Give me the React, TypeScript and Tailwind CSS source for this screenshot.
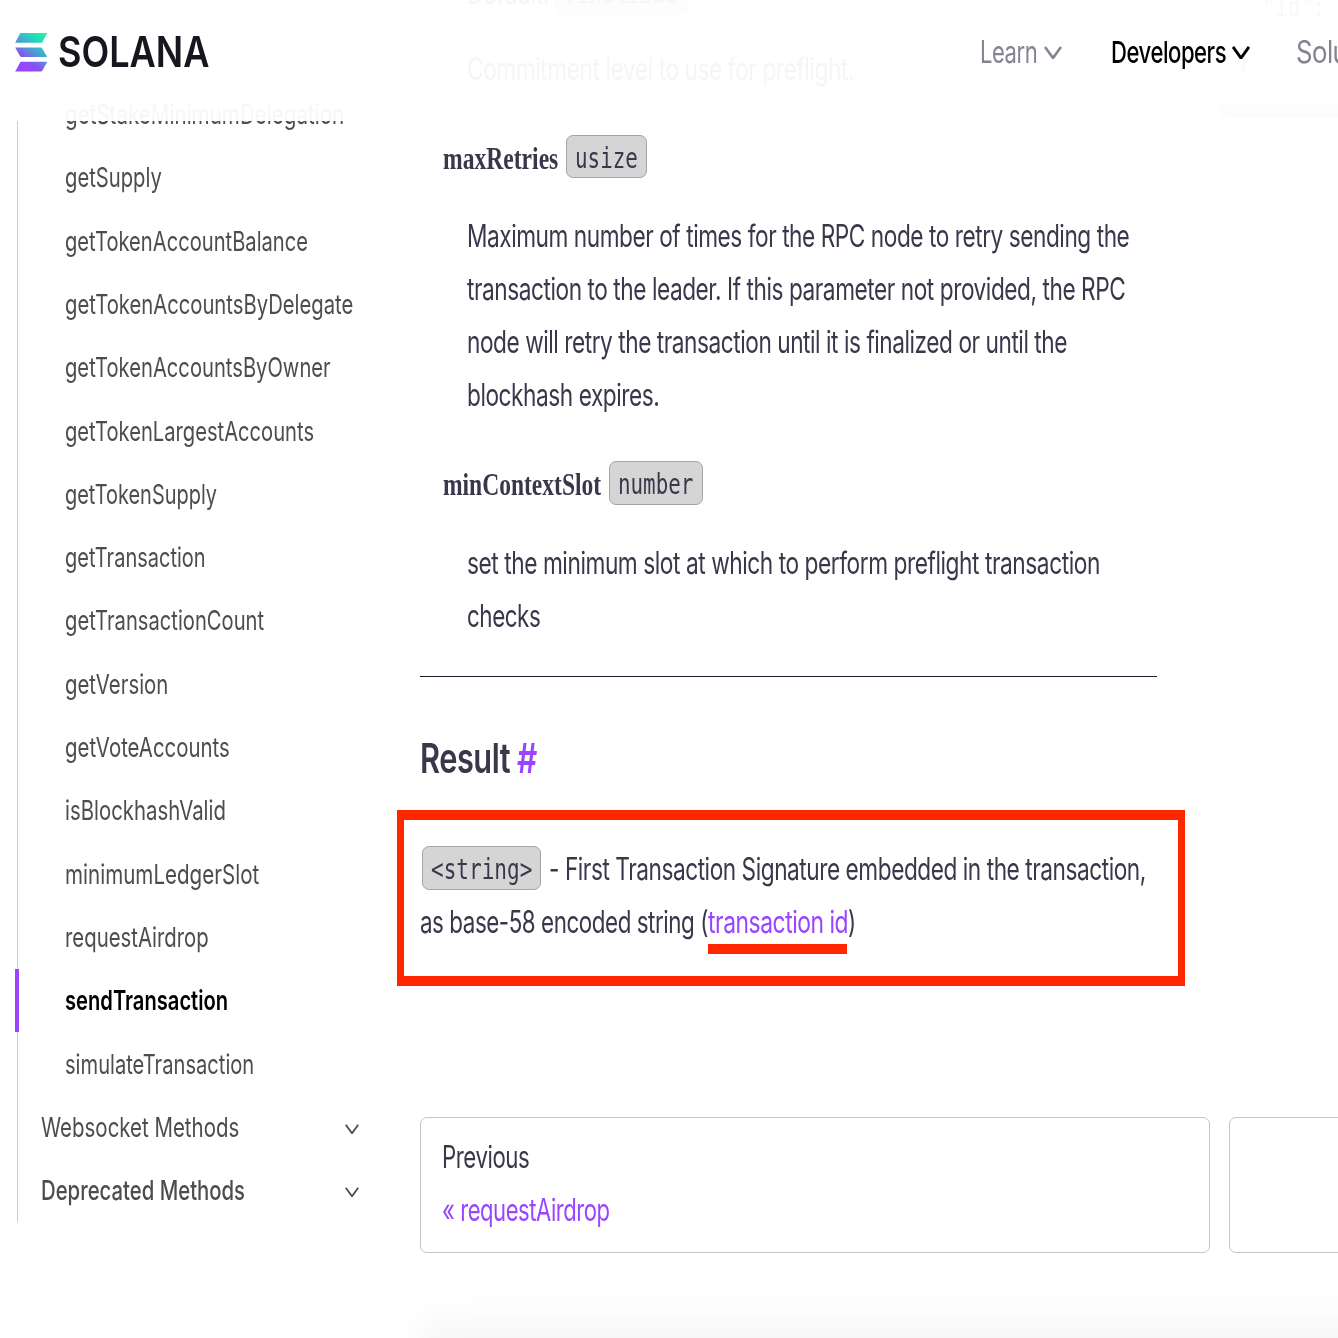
import { useLayoutEffect, useRef, useState, type ReactNode } from "react";

/* One line of text condensed horizontally to a fixed advance width. */
function Fit({ w, className = "", children }: { w: number; className?: string; children: ReactNode }) {
  const ref = useRef<HTMLSpanElement>(null);
  const [scale, setScale] = useState(1);
  useLayoutEffect(() => {
    if (ref.current) setScale(w / ref.current.offsetWidth);
  }, [w]);
  return (
    <span className={"block shrink-0 whitespace-pre " + className} style={{ width: w }}>
      <span ref={ref} className="inline-block origin-left" style={{ transform: `scaleX(${scale})` }}>
        {children}
      </span>
    </span>
  );
}

const methods: { name: string; w: number }[] = [
  { name: "getStakeMinimumDelegation", w: 279 },
  { name: "getSupply", w: 97 },
  { name: "getTokenAccountBalance", w: 243 },
  { name: "getTokenAccountsByDelegate", w: 288 },
  { name: "getTokenAccountsByOwner", w: 266 },
  { name: "getTokenLargestAccounts", w: 249 },
  { name: "getTokenSupply", w: 152 },
  { name: "getTransaction", w: 141 },
  { name: "getTransactionCount", w: 199 },
  { name: "getVersion", w: 103 },
  { name: "getVoteAccounts", w: 165 },
  { name: "isBlockhashValid", w: 161 },
  { name: "minimumLedgerSlot", w: 194 },
  { name: "requestAirdrop", w: 144 },
  { name: "sendTransaction", w: 163 },
  { name: "simulateTransaction", w: 189 },
];

function Chevron({ className }: { className: string }) {
  return (
    <svg viewBox="0 0 18 14" preserveAspectRatio="none" fill="none" stroke="currentColor" className={className}>
      <path d="M1 1 L9 13 L17 1" vectorEffect="non-scaling-stroke" />
    </svg>
  );
}

function Chip({ box, w, children }: { box: string; w: number; children: string }) {
  return (
    <span
      className={
        "mb-[1.5px] flex h-[43.5px] shrink-0 items-center rounded-[7px] border border-[#a5a5a5] bg-[#d5d5d5] pt-[3px] pl-[8px] font-['DejaVu_Sans_Mono',monospace] text-[27.5px] leading-[40px] tracking-normal " +
        box
      }
    >
      <Fit w={w}>{children}</Fit>
    </span>
  );
}

function Term({ name, w, children }: { name: string; w: number; children: ReactNode }) {
  return (
    <div className="flex h-[53px] items-center pl-[23px]">
      <Fit w={w} className="mt-[2px] mr-[8px] font-['Liberation_Serif',serif] text-[32px] font-bold tracking-normal">
        {name}
      </Fit>
      {children}
    </div>
  );
}

function Logo() {
  return (
    <div className="flex items-center">
      <svg width="33" height="40" viewBox="0 0 33 40">
        <defs>
          <linearGradient id="sol" gradientUnits="userSpaceOnUse" x1="3" y1="38" x2="29" y2="1">
            <stop offset="0.1" stopColor="#9945ff" />
            <stop offset="0.3" stopColor="#8752f3" />
            <stop offset="0.55" stopColor="#4a9fd4" />
            <stop offset="0.75" stopColor="#28d0c0" />
            <stop offset="1" stopColor="#19fb9b" />
          </linearGradient>
        </defs>
        <path
          fill="url(#sol)"
          d="M6 1H32.3L27 10.8H.2L4.6 2.2Q5.2 1 6 1ZM.2 15.4H26L27.2 16.4L32.3 25H6L4.8 23.8ZM6 29.8H32.3L27.4 38.6Q26.8 39.6 25.8 39.6H.2L5 30.8Q5.4 29.8 6 29.8Z"
        />
      </svg>
      <Fit w={151} className="ml-[10px] text-[42.5px] leading-[42px] font-semibold tracking-normal text-[#18151f]">
        SOLANA
      </Fit>
    </div>
  );
}

function Header() {
  return (
    <header className="absolute inset-x-0 top-0 z-10 h-[121px] bg-white/95">
      <div className="flex h-[104px] items-center pl-[15px] text-[30.5px] text-[#848391]">
        <Logo />
        <nav className="ml-[771px] flex items-center">
          <Fit w={57}>Learn</Fit>
          <Chevron className="ml-[7px] h-[13px] w-[18px] stroke-[2.6px]" />
          <Fit w={115} className="ml-[48.5px] font-medium text-black">
            Developers
          </Fit>
          <Chevron className="ml-[6px] h-[13px] w-[18px] stroke-[2.9px] text-black" />
          <Fit w={108} className="ml-[46.5px]">
            Solutions
          </Fit>
        </nav>
      </div>
    </header>
  );
}

function Sidebar() {
  return (
    <aside className="w-[420px] shrink-0 pt-[82.7px] pl-[17px]">
      <ul className="border-l border-[#cfcfcf] text-[27.7px] tracking-normal text-[#4d4d50]">
        {methods.map((m) => {
          const active = m.name === "sendTransaction";
          return (
            <li key={m.name} className="flex h-[63.3px] items-center">
              <span className={active ? "-ml-[3px] h-full w-[4px] bg-[#9945ff]" : "-ml-[3px] w-[4px]"} />
              <Fit w={m.w} className={active ? "ml-[45.5px] font-semibold text-black" : "ml-[45.5px] pt-px"}>
                {m.name}
              </Fit>
            </li>
          );
        })}
        <li className="flex h-[63.3px] w-[341px] items-center justify-between pl-[23px]">
          <Fit w={198} className="pt-px">
            Websocket Methods
          </Fit>
          <Chevron className="mt-[3px] h-[10px] w-[14px] stroke-[1.8px]" />
        </li>
        <li className="flex h-[63.3px] w-[341px] items-center justify-between pl-[23px]">
          <Fit w={204} className="font-medium">
            Deprecated Methods
          </Fit>
          <Chevron className="mt-[3px] h-[10px] w-[14px] stroke-[1.8px]" />
        </li>
      </ul>
    </aside>
  );
}

function Article() {
  return (
    <article className="w-[800px] shrink-0 leading-[53px]">
      <div className="-mt-[34px] flex h-[53px] items-center pl-[47px]">
        <Fit w={82}>Default:</Fit>
        <Chip box="ml-[6px] w-[132px]" w={113}>
          finalized
        </Chip>
      </div>
      <div className="mt-[23px] pl-[47px]">
        <Fit w={387}>Commitment level to use for preflight.</Fit>
      </div>

      <div className="mt-[35.5px]">
        <Term name="maxRetries" w={115}>
          <Chip box="w-[81px]" w={63}>
            usize
          </Chip>
        </Term>
        <div className="mt-[25.5px] pl-[46.5px]">
          <Fit w={662}>Maximum number of times for the RPC node to retry sending the</Fit>
          <Fit w={658}>transaction to the leader. If this parameter not provided, the RPC</Fit>
          <Fit w={600}>node will retry the transaction until it is finalized or until the</Fit>
          <Fit w={192}>blockhash expires.</Fit>
        </div>
      </div>

      <div className="mt-[36px]">
        <Term name="minContextSlot" w={158}>
          <Chip box="w-[94px]" w={75}>
            number
          </Chip>
        </Term>
        <div className="mt-[26px] pl-[46.5px]">
          <Fit w={633}>set the minimum slot at which to perform preflight transaction</Fit>
          <Fit w={73}>checks</Fit>
        </div>
      </div>

      <hr className="mt-[34px] w-[737px] border-t border-[#1c1a29]" />

      <h2 className="mt-[54.5px] flex text-[41px] font-semibold">
        <Fit w={90}>Result</Fit>
        <Fit w={20} className="ml-[7px] text-[#9945ff]">
          #
        </Fit>
      </h2>

      <div className="mt-[25px] -ml-[23px] h-[176px] w-[788px] border-x-[7px] border-y-[10px] border-[#ff2600] pt-[22.5px] pl-[16px]">
        <div className="flex h-[53px] items-center">
          <Chip box="ml-[2px] w-[119px]" w={101}>
            {"<string>"}
          </Chip>
          <Fit w={597} className="ml-[8px]">
            - First Transaction Signature embedded in the transaction,
          </Fit>
        </div>
        <div className="flex h-[53px]">
          <Fit w={288}>as base-58 encoded string (</Fit>
          <span className="relative text-[#9945ff]">
            <Fit w={140}>transaction id</Fit>
            <span className="absolute top-[48.5px] left-0 h-[10px] w-[139px] bg-[#ff2600]" />
          </span>
          <Fit w={8}>)</Fit>
        </div>
      </div>

      <div className="mt-[131px] flex w-max gap-[19px]">
        <div className="h-[136px] w-[790px] rounded-[7px] border border-[#c6c6c6] pt-[12.5px] pl-[20.5px]">
          <Fit w={87}>Previous</Fit>
          <Fit w={168} className="text-[#9945ff]">
            « requestAirdrop
          </Fit>
        </div>
        <div className="h-[136px] w-[790px] rounded-[7px] border border-[#c6c6c6]" />
      </div>
    </article>
  );
}

function CodePanel() {
  return (
    <div className="h-[118px] w-[200px] shrink-0 overflow-hidden rounded-b-[7px] bg-[#eeeef0] font-['DejaVu_Sans_Mono',monospace] text-[26px] leading-[52px] tracking-normal text-[#77758a]">
      <div className="flex h-[105px] flex-col pl-[18px]">
        <Fit w={62} className="-mt-[19px] ml-[25px]">
          {'"id":'}
        </Fit>
        <Fit w={12}>{"}"}</Fit>
      </div>
      <div className="h-[13px] bg-[#c4c4c4]" />
    </div>
  );
}

export default function App() {
  return (
    <div className="relative h-[1338px] w-[1338px] overflow-hidden bg-white font-['Inter',sans-serif] text-[30.7px] tracking-[-0.02em] text-[#3b374b]">
      <div className="flex">
        <Sidebar />
        <Article />
        <CodePanel />
      </div>
      <div className="absolute -right-[60px] -bottom-[30px] h-[52px] w-[980px] rounded-[40px] bg-[#f7f7f7] blur-[14px]" />
      <Header />
    </div>
  );
}
